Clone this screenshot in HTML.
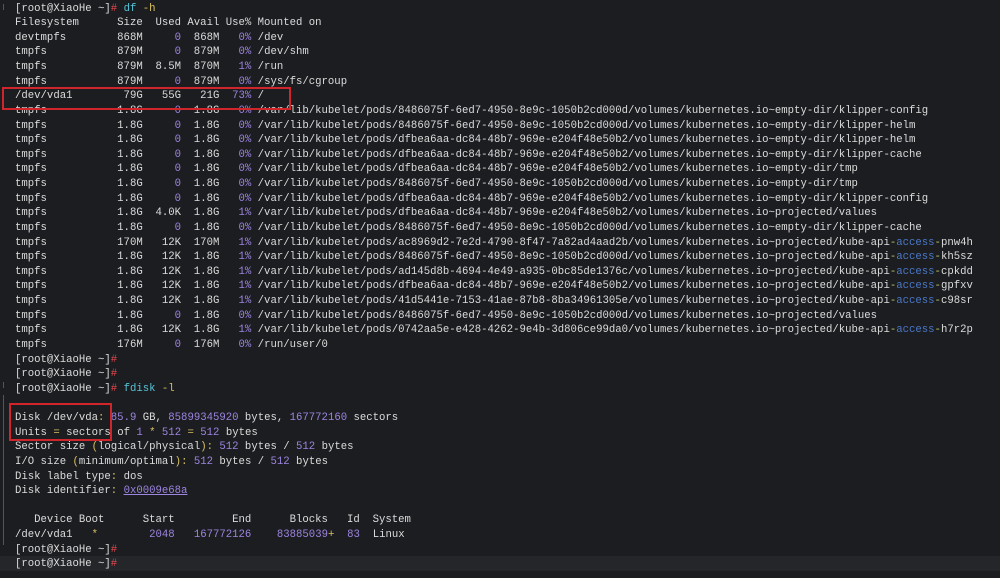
<!DOCTYPE html>
<html><head><meta charset="utf-8"><style>
html,body{margin:0;padding:0;background:#1c1d20;width:1000px;height:578px;overflow:hidden}
pre{margin:0;position:absolute;left:15px;top:1.5px;font-family:"Liberation Mono",monospace;font-size:10.65px;line-height:14.62px;color:#dcdcdc}
.p{color:#9d85e0}.r{color:#e0484f}.c{color:#55c3d8}.y{color:#d8c060}.b{color:#4a78c8}.g{color:#b8c96a}
.box{position:absolute;border:2px solid #d0262b}
.hl{position:absolute;left:0;top:556px;width:1000px;height:15px;background:#25262a}
.gut{position:absolute;left:3px;width:1px;background:#555}
</style></head><body>
<div class="hl"></div>
<div class="gut" style="top:4px;height:6px"></div>
<div class="gut" style="top:382px;height:6px"></div>
<div class="gut" style="top:395px;height:150px"></div>
<pre>[root@XiaoHe ~]<span class="r">#</span> <span class="c">df</span> <span class="y">-h</span>
Filesystem      Size  Used Avail Use% Mounted on
devtmpfs        868M     <span class="p">0</span>  868M   <span class="p">0%</span> /dev
tmpfs           879M     <span class="p">0</span>  879M   <span class="p">0%</span> /dev/shm
tmpfs           879M  8.5M  870M   <span class="p">1%</span> /run
tmpfs           879M     <span class="p">0</span>  879M   <span class="p">0%</span> /sys/fs/cgroup
/dev/vda1        79G   55G   21G  <span class="p">73%</span> /
tmpfs           1.8G     <span class="p">0</span>  1.8G   <span class="p">0%</span> /var/lib/kubelet/pods/8486075f-6ed7-4950-8e9c-1050b2cd000d/volumes/kubernetes.io~empty-dir/klipper-config
tmpfs           1.8G     <span class="p">0</span>  1.8G   <span class="p">0%</span> /var/lib/kubelet/pods/8486075f-6ed7-4950-8e9c-1050b2cd000d/volumes/kubernetes.io~empty-dir/klipper-helm
tmpfs           1.8G     <span class="p">0</span>  1.8G   <span class="p">0%</span> /var/lib/kubelet/pods/dfbea6aa-dc84-48b7-969e-e204f48e50b2/volumes/kubernetes.io~empty-dir/klipper-helm
tmpfs           1.8G     <span class="p">0</span>  1.8G   <span class="p">0%</span> /var/lib/kubelet/pods/dfbea6aa-dc84-48b7-969e-e204f48e50b2/volumes/kubernetes.io~empty-dir/klipper-cache
tmpfs           1.8G     <span class="p">0</span>  1.8G   <span class="p">0%</span> /var/lib/kubelet/pods/dfbea6aa-dc84-48b7-969e-e204f48e50b2/volumes/kubernetes.io~empty-dir/tmp
tmpfs           1.8G     <span class="p">0</span>  1.8G   <span class="p">0%</span> /var/lib/kubelet/pods/8486075f-6ed7-4950-8e9c-1050b2cd000d/volumes/kubernetes.io~empty-dir/tmp
tmpfs           1.8G     <span class="p">0</span>  1.8G   <span class="p">0%</span> /var/lib/kubelet/pods/dfbea6aa-dc84-48b7-969e-e204f48e50b2/volumes/kubernetes.io~empty-dir/klipper-config
tmpfs           1.8G  4.0K  1.8G   <span class="p">1%</span> /var/lib/kubelet/pods/dfbea6aa-dc84-48b7-969e-e204f48e50b2/volumes/kubernetes.io~projected/values
tmpfs           1.8G     <span class="p">0</span>  1.8G   <span class="p">0%</span> /var/lib/kubelet/pods/8486075f-6ed7-4950-8e9c-1050b2cd000d/volumes/kubernetes.io~empty-dir/klipper-cache
tmpfs           170M   12K  170M   <span class="p">1%</span> /var/lib/kubelet/pods/ac8969d2-7e2d-4790-8f47-7a82ad4aad2b/volumes/kubernetes.io~projected/kube-api<span class="g">-</span><span class="b">access</span><span class="g">-</span>pnw4h
tmpfs           1.8G   12K  1.8G   <span class="p">1%</span> /var/lib/kubelet/pods/8486075f-6ed7-4950-8e9c-1050b2cd000d/volumes/kubernetes.io~projected/kube-api<span class="g">-</span><span class="b">access</span><span class="g">-</span>kh5sz
tmpfs           1.8G   12K  1.8G   <span class="p">1%</span> /var/lib/kubelet/pods/ad145d8b-4694-4e49-a935-0bc85de1376c/volumes/kubernetes.io~projected/kube-api<span class="g">-</span><span class="b">access</span><span class="g">-</span>cpkdd
tmpfs           1.8G   12K  1.8G   <span class="p">1%</span> /var/lib/kubelet/pods/dfbea6aa-dc84-48b7-969e-e204f48e50b2/volumes/kubernetes.io~projected/kube-api<span class="g">-</span><span class="b">access</span><span class="g">-</span>gpfxv
tmpfs           1.8G   12K  1.8G   <span class="p">1%</span> /var/lib/kubelet/pods/41d5441e-7153-41ae-87b8-8ba34961305e/volumes/kubernetes.io~projected/kube-api<span class="g">-</span><span class="b">access</span><span class="g">-</span>c98sr
tmpfs           1.8G     <span class="p">0</span>  1.8G   <span class="p">0%</span> /var/lib/kubelet/pods/8486075f-6ed7-4950-8e9c-1050b2cd000d/volumes/kubernetes.io~projected/values
tmpfs           1.8G   12K  1.8G   <span class="p">1%</span> /var/lib/kubelet/pods/0742aa5e-e428-4262-9e4b-3d806ce99da0/volumes/kubernetes.io~projected/kube-api<span class="g">-</span><span class="b">access</span><span class="g">-</span>h7r2p
tmpfs           176M     <span class="p">0</span>  176M   <span class="p">0%</span> /run/user/0
[root@XiaoHe ~]<span class="r">#</span>
[root@XiaoHe ~]<span class="r">#</span>
[root@XiaoHe ~]<span class="r">#</span> <span class="c">fdisk</span> <span class="y">-l</span>

Disk /dev/vda<span class="y">:</span> <span class="p">85.9</span> GB, <span class="p">85899345920</span> bytes, <span class="p">167772160</span> sectors
Units <span class="y">=</span> sectors of <span class="p">1</span> <span class="y">*</span> <span class="p">512</span> <span class="y">=</span> <span class="p">512</span> bytes
Sector size <span class="y">(</span>logical/physical<span class="y">)</span><span class="y">:</span> <span class="p">512</span> bytes / <span class="p">512</span> bytes
I/O size <span class="y">(</span>minimum/optimal<span class="y">)</span><span class="y">:</span> <span class="p">512</span> bytes / <span class="p">512</span> bytes
Disk label type<span class="y">:</span> dos
Disk identifier<span class="y">:</span> <span class="p" style="text-decoration:underline">0x0009e68a</span>

   Device Boot      Start         End      Blocks   Id  System
/dev/vda1   <span class="y">*</span>        <span class="p">2048</span>   <span class="p">167772126</span>    <span class="p">83885039</span><span class="y">+</span>  <span class="p">83</span>  Linux
[root@XiaoHe ~]<span class="r">#</span>
[root@XiaoHe ~]<span class="r">#</span>
</pre>
<div class="box" style="left:2px;top:87px;width:285px;height:19px"></div>
<div class="box" style="left:9px;top:403px;width:99px;height:34px"></div>
</body></html>
